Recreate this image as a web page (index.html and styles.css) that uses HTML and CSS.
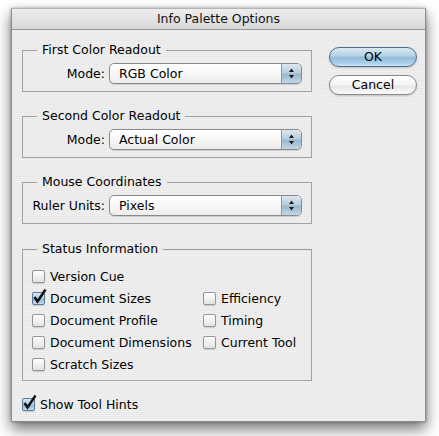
FILE: index.html
```html
<!DOCTYPE html>
<html>
<head>
<meta charset="utf-8">
<link rel="stylesheet" href="styles.css">
</head>
<body>
<div class="window">
  <div class="titlebar">Info Palette Options</div>
  <div class="content">
    <div class="main">
      <fieldset class="group">
        <legend>First Color Readout</legend>
        <div class="field">
          <span class="field-label">Mode:</span>
          <div class="popup"><span class="popup-text">RGB Color</span><span class="arrows"><svg width="7" height="11" viewBox="0 0 7 11"><path d="M3.5 0.5 L6 4 L1 4 Z M1 7 L6 7 L3.5 10.5 Z" fill="#1a1a1a"/></svg></span></div>
        </div>
      </fieldset>
      <fieldset class="group">
        <legend>Second Color Readout</legend>
        <div class="field">
          <span class="field-label">Mode:</span>
          <div class="popup"><span class="popup-text">Actual Color</span><span class="arrows"><svg width="7" height="11" viewBox="0 0 7 11"><path d="M3.5 0.5 L6 4 L1 4 Z M1 7 L6 7 L3.5 10.5 Z" fill="#1a1a1a"/></svg></span></div>
        </div>
      </fieldset>
      <fieldset class="group">
        <legend>Mouse Coordinates</legend>
        <div class="field">
          <span class="field-label">Ruler Units:</span>
          <div class="popup"><span class="popup-text">Pixels</span><span class="arrows"><svg width="7" height="11" viewBox="0 0 7 11"><path d="M3.5 0.5 L6 4 L1 4 Z M1 7 L6 7 L3.5 10.5 Z" fill="#1a1a1a"/></svg></span></div>
        </div>
      </fieldset>
      <fieldset class="group status">
        <legend>Status Information</legend>
        <div class="checks">
          <div class="check"><span class="box"></span>Version Cue</div>
          <div></div>
          <div class="check"><span class="box checked"><svg class="tick" width="16" height="17" viewBox="0 0 16 17"><path d="M2.5 9 L5.5 13.5 L13.5 1.5" fill="none" stroke="#111" stroke-width="2.4" stroke-linejoin="miter"/></svg></span>Document Sizes</div>
          <div class="check"><span class="box"></span>Efficiency</div>
          <div class="check"><span class="box"></span>Document Profile</div>
          <div class="check"><span class="box"></span>Timing</div>
          <div class="check"><span class="box"></span>Document Dimensions</div>
          <div class="check"><span class="box"></span>Current Tool</div>
          <div class="check"><span class="box"></span>Scratch Sizes</div>
          <div></div>
        </div>
      </fieldset>
      <div class="check hints"><span class="box checked"><svg class="tick" width="16" height="17" viewBox="0 0 16 17"><path d="M2.5 9 L5.5 13.5 L13.5 1.5" fill="none" stroke="#111" stroke-width="2.4" stroke-linejoin="miter"/></svg></span>Show Tool Hints</div>
    </div>
    <div class="buttons">
      <div class="btn btn-default">OK</div>
      <div class="btn">Cancel</div>
    </div>
  </div>
</div>
</body>
</html>
```

FILE: styles.css
```css
html, body {
  margin: 0;
  padding: 0;
  background: #ffffff;
}
body {
  font-family: "DejaVu Sans", "Liberation Sans", sans-serif;
  font-size: 12.5px;
  color: #000;
  min-height: 436px;
}
.window {
  margin: 8px 0 0 11px;
  width: 415px;
  height: 414px;
  box-sizing: border-box;
  border: 1px solid #8e8e8e;
  border-top-color: #b5b5b5;
  background: repeating-linear-gradient(to bottom, #f0f0f0 0, #f0f0f0 1px, #e8e8e8 1px, #e8e8e8 2px);
  box-shadow: 0 7px 14px rgba(0,0,0,0.55), 0 0 3px rgba(0,0,0,0.3);
  display: flex;
  flex-direction: column;
}
.titlebar {
  height: 20px;
  line-height: 20px;
  text-align: center;
  color: #111;
  border-bottom: 1px solid #9a9a9a;
  background: linear-gradient(to bottom, #ededed 0%, #e3e3e3 50%, #d7d7d7 100%);
}
.content {
  display: flex;
  flex: 1;
}
.main {
  width: 290px;
  margin-left: 10px;
  padding-top: 12px;
  display: flex;
  flex-direction: column;
  gap: 16px;
}
.group {
  margin: 0;
  padding: 0;
  border: 1px solid #a3a3a3;
  border-top-color: #9c9c9c;
  min-width: 0;
}
.group legend {
  margin-left: 14px;
  padding: 0 5px;
  line-height: 16px;
}
.status {
  margin-top: 1px;
}
.field {
  display: flex;
  align-items: center;
  padding: 5px 0 7px 0;
}
.field-label {
  width: 82px;
  text-align: right;
  margin-right: 4px;
}
.popup {
  width: 193px;
  height: 21px;
  box-sizing: border-box;
  border: 1px solid #8a8a8a;
  border-radius: 5px;
  display: flex;
  overflow: hidden;
  background: linear-gradient(to bottom, #ffffff 0%, #f7f7f7 50%, #ececec 100%);
  box-shadow: 0 1px 1px rgba(0,0,0,0.12);
}
.popup-text {
  flex: 1;
  padding-left: 9px;
  line-height: 19px;
}
.arrows {
  width: 19px;
  border-left: 1px solid #8a9aa8;
  display: flex;
  align-items: center;
  justify-content: center;
  background: linear-gradient(to bottom, #dde8f1 0%, #b8cddd 45%, #9ab7cd 55%, #c2d7e6 100%);
}
.checks {
  display: grid;
  grid-template-columns: 171px auto;
  grid-auto-rows: 22px;
  padding: 8px 0 5px 9px;
}
.check {
  display: flex;
  align-items: center;
  gap: 5px;
  white-space: nowrap;
}
.box {
  position: relative;
  width: 13px;
  height: 13px;
  box-sizing: border-box;
  border: 1px solid #959595;
  border-radius: 2px;
  background: linear-gradient(to bottom, #ffffff 0%, #f1f1f1 50%, #e2e2e2 100%);
  box-shadow: 0 1px 1px rgba(0,0,0,0.15);
  flex: none;
}
.box.checked {
  border-color: #5d7a93;
  background: linear-gradient(to bottom, #d8e8f5 0%, #a9c8e0 50%, #8fb6d4 55%, #c6dcee 100%);
}
.tick {
  position: absolute;
  left: -1px;
  top: -5px;
}
.hints {
  height: 22px;
  margin-top: -4px;
}
.buttons {
  margin-left: 17px;
  padding-top: 17px;
  display: flex;
  flex-direction: column;
  gap: 8px;
}
.btn {
  width: 88px;
  height: 20px;
  box-sizing: border-box;
  border: 1px solid #8a8a8a;
  border-radius: 10px;
  text-align: center;
  line-height: 18px;
  background: linear-gradient(to bottom, #ffffff 0%, #f4f4f4 50%, #e6e6e6 55%, #fafafa 100%);
  box-shadow: 0 1px 2px rgba(0,0,0,0.2);
}
.btn-default {
  border-color: #4d6f8c;
  background: linear-gradient(to bottom, #d9e8f3 0%, #b4d0e4 45%, #93bcd9 52%, #a9d0ec 85%, #cbe6f8 100%);
}
```
